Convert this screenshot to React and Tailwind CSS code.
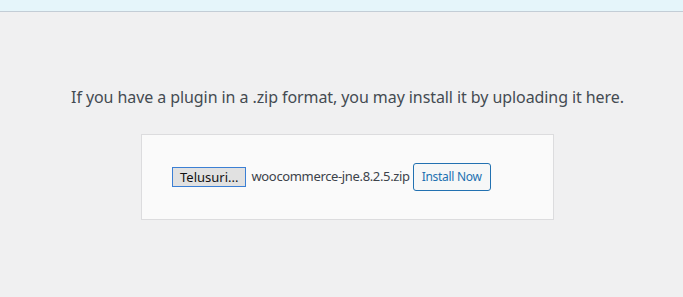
import React from "react";

export default function App() {
  return (
    <div className="min-h-[297px] bg-[#f0f0f1] font-['Noto_Sans',sans-serif] text-[#3c434a]">
      {/* Notice strip */}
      <div className="h-[12px] bg-[#e5f5fa] border-b border-[#c3cdd6]" />

      <div className="flex flex-col items-center pl-[12px] pt-[73px]">
        <p className="text-[16px] leading-[24px] tracking-[-0.08px] text-[#444b52]">
          If you have a plugin in a .zip format, you may install it by uploading it here.
        </p>

        <form className="mt-[25px] w-[413px] h-[86px] bg-[#fafafa] border border-[#dcdcde] flex items-center pl-[30px]">
          <label className="h-[20px] px-[7px] flex items-center bg-[#e1e1e1] border border-[#3b7fd4] text-[13px] text-[#111] leading-none">
            Telusuri...
          </label>
          <span className="ml-[5px] text-[13px] text-[#3c434a] tracking-[-0.35px]">woocommerce-jne.8.2.5.zip</span>
          <button
            type="button"
            className="ml-[3px] h-[28px] px-[8px] rounded-[3px] border border-[#2271b1] bg-[#f6f7f7] text-[#2271b1] text-[12px] tracking-[-0.3px] leading-none"
          >
            Install Now
          </button>
        </form>
      </div>
    </div>
  );
}
